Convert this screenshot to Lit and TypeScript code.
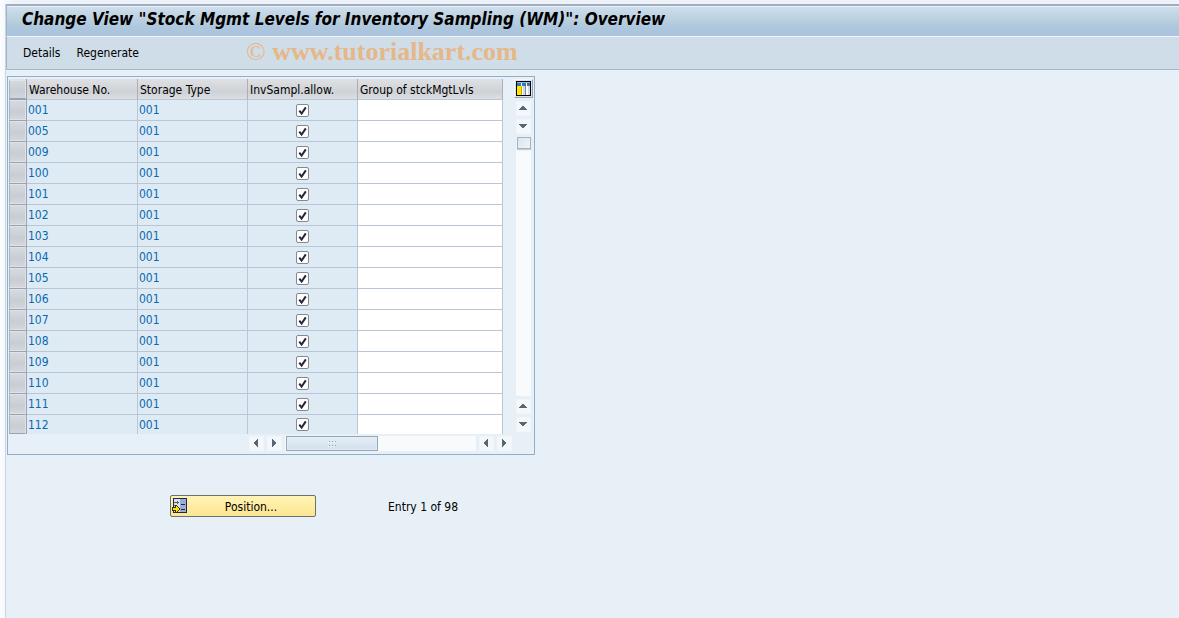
import { LitElement, html, css, svg } from "lit";
import { customElement, property } from "lit/decorators.js";

const WAREHOUSES = [
  "001", "005", "009", "100", "101", "102", "103", "104",
  "105", "106", "107", "108", "109", "110", "111", "112",
];

const ARROWS: Record<string, string> = {
  up: "M5 4h2v1h1v1h1v1h1v1H2V7h1V6h1V5h1z",
  down: "M2 4h8v1H9v1H8v1H7v1H5V7H4V6H3V5H2z",
  left: "M4 5h1V4h1V3h1V2h1v8H7V9H6V8H5V7H4z",
  right: "M8 5H7V4H6V3H5V2H4v8h1V9h1V8h1V7h1z",
};

@customElement("scroll-arrow")
export class ScrollArrow extends LitElement {
  @property() direction = "up";

  static styles = css`
    :host { display: block; }
    .arrow {
      display: block; box-sizing: border-box; width: 15px; height: 15px; padding: 0;
      border: 1px solid #f1f4f8; background: #f5f8fb;
    }
    .glyph { display: block; }
  `;

  render() {
    return html`<button class="arrow" type="button" aria-label="Scroll ${this.direction}">
      <svg class="glyph" width="13" height="13" viewBox="0 0 13 13" shape-rendering="crispEdges">
        ${svg`<path fill="#546878" d=${ARROWS[this.direction]}></path>`}
      </svg>
    </button>`;
  }
}

@customElement("levels-table")
export class LevelsTable extends LitElement {
  static styles = css`
    :host {
      display: grid;
      grid-template-columns: auto 19px;
      column-gap: 11px;
      width: max-content;
      padding: 2px 1px 3px;
      border: 1px solid #8eb0ce;
      background: #e8f0f7;
    }
    .grid {
      table-layout: fixed; width: 494px;
      border-collapse: separate; border-spacing: 0;
      font: 12px/20px "DejaVu Sans Condensed", "DejaVu Sans", sans-serif;
      color: #0a68b0;
    }
    .c-sel { width: 18px; }
    .c-key { width: 111px; }
    .c-type, .c-allow { width: 110px; }
    .c-group { width: 145px; }
    th, td {
      box-sizing: border-box; height: 21px; padding: 0 1px; text-align: left;
      border-right: 1px solid #b9c6d6; border-bottom: 1px solid #b9c6d6;
      white-space: nowrap; overflow: hidden;
    }
    th {
      padding: 2px 2px 0; color: #000; font-weight: normal; line-height: 18px;
      background: linear-gradient(#dfe1e4, #d3d6da 45%, #ced2d7 65%, #dcdfe2);
      border-right-color: #a9b0ba;
    }
    td { background: #deebf5; }
    td.entry { background: #fff; }
    td.select, th.select {
      padding: 0; border-right: 1px solid #98a2b2; border-bottom-color: #98a2b2;
    }
    .row-button {
      display: block; width: 100%; height: 20px; padding: 0;
      border: 1px solid #dfe3e8; border-left-color: #a9b2bf;
      background: linear-gradient(#d6dae0, #c8cdd4 60%, #d3d7dc);
    }
    tr:last-child td { height: 19px; line-height: 18px; border-bottom: 0; }
    tr:last-child .row-button { height: 19px; border-bottom-color: #98a2b2; }
    .check { display: grid; width: 13px; height: 13px; margin: 0 auto; }
    .box, .tick { grid-area: 1 / 1; }
    .box {
      appearance: none; box-sizing: border-box; width: 13px; height: 13px; margin: 0;
      border: 1px solid #85898f; border-radius: 2px; background: #fff;
    }
    .tick { pointer-events: none; visibility: hidden; }
    .box:checked + .tick { visibility: visible; }
    .text {
      display: block; box-sizing: border-box; width: 100%; height: 18px;
      padding: 0; border: 0; outline: 0; background: none; font: inherit; color: #000;
    }
    .side {
      display: flex; flex-direction: column; align-items: center; gap: 3px;
      padding-bottom: 2px;
    }
    .config {
      display: block; box-sizing: border-box; width: 19px; height: 19px; padding: 1px;
      border: 1px solid #f4f6f8; border-right: 1px solid #9da5af; border-bottom: 1px solid #9da5af;
      background: #dfe3e8;
    }
    .config svg { display: block; }
    .track { background: #f9fafc; }
    .side .track { flex: 1; width: 15px; }
    .thumb {
      box-sizing: border-box; border: 1px solid #a3b3c3;
      background: linear-gradient(135deg, #d9e5f0, #eef4f9);
    }
    .side .thumb { width: 14px; height: 12px; margin: 0 auto; box-shadow: 0 1px 1px #c3cdd8; }
    .bottom {
      display: flex; align-items: center; gap: 3px;
      margin: 2px -9px 0 240px;
    }
    .bottom .track { flex: 1; height: 15px; padding-left: 1px; }
    .bottom .thumb {
      display: flex; align-items: center; justify-content: center;
      width: 92px; height: 15px; border-color: #94a8bc;
      background: linear-gradient(#e6eef6, #d2dfeb);
      box-shadow: inset 0 0 0 1px #e2ebf3;
    }
  `;

  private arrow(direction: string) {
    return html`<scroll-arrow direction=${direction}></scroll-arrow>`;
  }

  render() {
    return html`
      <table class="grid">
        <colgroup>
          <col class="c-sel"><col class="c-key"><col class="c-type"><col class="c-allow"><col class="c-group">
        </colgroup>
        <thead>
          <tr>
            <th class="select"><button class="row-button" type="button" aria-label="Select all"></button></th>
            <th>Warehouse No.</th><th>Storage Type</th><th>InvSampl.allow.</th><th>Group of stckMgtLvls</th>
          </tr>
        </thead>
        <tbody>
          ${WAREHOUSES.map((no) => html`
            <tr>
              <td class="select"><button class="row-button" type="button" aria-label="Select ${no}"></button></td>
              <td>${no}</td>
              <td>001</td>
              <td>
                <label class="check">
                  <input class="box" type="checkbox" checked aria-label="Sampling allowed for ${no}">
                  <svg class="tick" width="13" height="13" viewBox="0 0 13 13">
                    <path d="M3.3 6.6 5.6 9.6 9.8 3.4" fill="none" stroke="#26263c" stroke-width="2"></path>
                  </svg>
                </label>
              </td>
              <td class="entry"><input class="text" type="text" aria-label="Group for ${no}"></td>
            </tr>`)}
        </tbody>
      </table>
      <div class="side">
        <button class="config" type="button" aria-label="Table settings">
          <svg width="15" height="15" viewBox="0 0 15 15" shape-rendering="crispEdges">
            <path fill="#000" d="M0 0h15v15H0z"></path>
            <path fill="#fff" d="M1 1h13v13H1z"></path>
            <path fill="#2e78b7" d="M1 2h4v3H1zM6 2h4v3H6zM11 2h3v3h-3z"></path>
            <path fill="#8ebce0" d="M1 1h13v1H1z"></path>
            <path fill="#ffe600" d="M1 5h4v9H1z"></path>
            <path fill="#c9a800" d="M5 5h1v9H5z"></path>
            <path fill="#d5dade" d="M7 5h2v9H7zM12 5h2v9h-2z"></path>
            <path fill="#7f8a94" d="M9 5h1v9H9z"></path>
          </svg>
        </button>
        ${this.arrow("up")}${this.arrow("down")}
        <div class="track"><div class="thumb"></div></div>
        ${this.arrow("up")}${this.arrow("down")}
      </div>
      <div class="bottom">
        ${this.arrow("left")}${this.arrow("right")}
        <div class="track">
          <div class="thumb">
            <svg width="9" height="6" viewBox="0 0 9 6" shape-rendering="crispEdges">
              <path fill="#8fa3b6" d="M1 0h1v1H1zM4 0h1v1H4zM7 0h1v1H7zM1 4h1v1H1zM4 4h1v1H4zM7 4h1v1H7z"></path>
              <path fill="#fff" d="M0 1h1v1H0zM3 1h1v1H3zM6 1h1v1H6zM0 5h1v1H0zM3 5h1v1H3zM6 5h1v1H6z"></path>
            </svg>
          </div>
        </div>
        ${this.arrow("left")}${this.arrow("right")}
      </div>
    `;
  }
}

@customElement("app-root")
export class AppRoot extends LitElement {
  static styles = css`
    :host {
      display: flex; flex-direction: column; box-sizing: border-box;
      min-height: 100vh; padding: 4px 0 0 5px;
      background: linear-gradient(90deg, #fbfcfe, #eef3f9 12px);
      font: 12px/16px "DejaVu Sans Condensed", "DejaVu Sans", sans-serif;
      color: #000;
    }
    .window {
      flex: 1; border-left: 1px solid #ccd6e2; background: #e8f0f7;
    }
    .title {
      margin: 0; padding: 1px 15px 4px; border-top: 2px solid #a3aec2;
      border-left: 1px solid #9fb4c8;
      border-bottom: 1px solid #eef4f9;
      box-shadow: inset 0 1px #e8f0f8;
      font-size: 17px; line-height: 25px; font-weight: bold; font-style: italic;
      background: linear-gradient(#cfdfed, #b9cedd 50%, #adc7df 70%, #abc3dc);
      white-space: nowrap;
    }
    .toolbar {
      display: flex; align-items: center; height: 32px; padding-left: 16px; gap: 16px;
      border-left: 1px solid #9fb4c8; border-bottom: 1px solid #a5b8ca;
      background: #cfdde8;
    }
    .tool { padding: 0; border: 0; background: none; font: inherit; color: inherit; }
    .mark {
      margin-left: 91px; padding-bottom: 2px; color: #e6b788; white-space: nowrap;
      font: bold 26px/30px "Liberation Serif", serif;
    }
    .sign { font-weight: normal; }
    .content { padding: 6px 1px 0; }
    .footer { display: flex; align-items: center; gap: 72px; padding: 40px 0 0 163px; }
    .position {
      display: flex; align-items: center; box-sizing: border-box; width: 146px; height: 22px; padding: 0 1px;
      border: 1px solid #6f6f6c; border-radius: 2px;
      background: linear-gradient(#fff3b8, #ffeda0 50%, #fbe694);
      font: inherit; color: inherit;
    }
    .caption { flex: 1; padding-top: 2px; text-align: center; }
    .entry-count { padding-top: 2px; }
  `;

  render() {
    return html`
      <main class="window">
        <h1 class="title">Change View "Stock Mgmt Levels for Inventory Sampling (WM)": Overview</h1>
        <div class="toolbar">
          <button class="tool" type="button">Details</button>
          <button class="tool" type="button">Regenerate</button>
          <span class="mark"><span class="sign">©</span> www.tutorialkart.com</span>
        </div>
        <div class="content">
          <levels-table></levels-table>
          <div class="footer">
            <button class="position" type="button">
              <svg width="16" height="16" viewBox="0 0 16 16" shape-rendering="crispEdges">
                <path fill="#20284a" d="M1 0h14v15H1z"></path>
                <path fill="#d8e2ef" d="M2 1h6v13H2z"></path>
                <path fill="#9dacd2" d="M8 1h6v13H8z"></path>
                <path fill="#20284a" d="M9 6h4v1H9zM9 11h4v1H9z"></path>
                <path fill="#56617f" d="M2 4h5v1H2zM5 3h1v1H5zM5 5h1v1H5zM2 7h2v1H2z"></path>
                <path fill="#3b3200" d="M3 7h2v1h1v1h1v1h1v2H7v1H6v1H5v1H3v-2H0V9h3z"></path>
                <path fill="#ffe400" d="M4 8h1v1h1v1h1v2H6v1H5v1H4v-2H1v-2h3z"></path>
              </svg>
              <span class="caption">Position...</span>
            </button>
            <span class="entry-count">Entry 1 of 98</span>
          </div>
        </div>
      </main>
    `;
  }
}
